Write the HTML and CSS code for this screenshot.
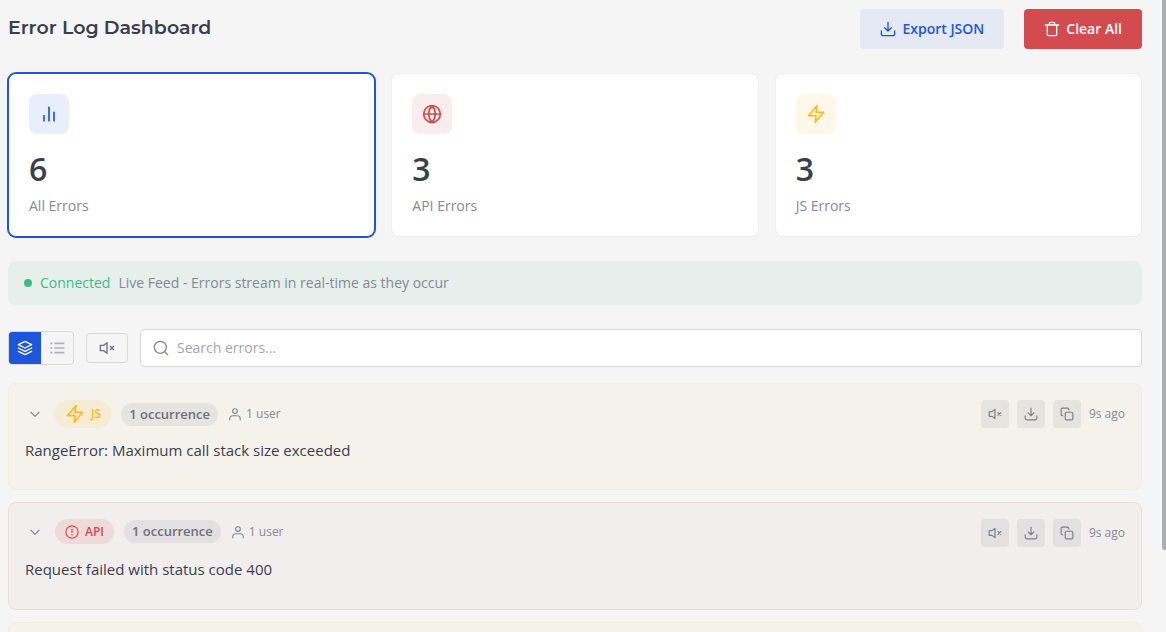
FILE: index.html
```
<!DOCTYPE html>
<html lang="en">
<head>
  <meta charset="UTF-8" />
  <title>Error Log Dashboard</title>
  <meta name="viewport" content="width=device-width, initial-scale=1" />
  <link rel="stylesheet" href="styles.css">
</head>
<body>
  <!-- shared icons -->
  <svg class="sprite" aria-hidden="true">
    <symbol id="i-download" viewBox="0 0 24 24"><path d="M2 15v4a3 3 0 0 0 3 3h14a3 3 0 0 0 3-3v-4M12 2v13M7 10l5 5 5-5" /></symbol>
    <symbol id="i-trash" viewBox="0 0 24 24"><path d="M2 6h20M5 6v14a2 2 0 0 0 2 2h10a2 2 0 0 0 2-2V6M8 6V4a2 2 0 0 1 2-2h4a2 2 0 0 1 2 2v2" /></symbol>
    <symbol id="i-bars" viewBox="0 0 24 24"><path d="M6 20v-6M12 20V4M18 20V10" /></symbol>
    <symbol id="i-globe" viewBox="0 0 24 24"><circle cx="12" cy="12" r="10" /><path d="M2 12h20M12 2a15.3 15.3 0 0 1 4 10 15.3 15.3 0 0 1-4 10 15.3 15.3 0 0 1-4-10 15.3 15.3 0 0 1 4-10z" /></symbol>
    <symbol id="i-bolt" viewBox="0 0 24 24"><path d="M13 2L3 14h9l-1 8 10-12h-9l1-8z" /></symbol>
    <symbol id="i-layers" viewBox="0 0 24 24"><path d="M12 2L2 7l10 5 10-5-10-5zM2 12l10 5 10-5M2 17l10 5 10-5" /></symbol>
    <symbol id="i-list" viewBox="0 0 24 24"><path stroke-linecap="butt" stroke-width="2.500" d="M8 5h15M8 12h15M8 19h15M2 5h3M2 12h3M2 19h3" /></symbol>
    <symbol id="i-mute" viewBox="0 0 24 24"><path d="M12 4L7 8H2v8h5l5 4zM17 9.500l5 5M22 9.500l-5 5" /></symbol>
    <symbol id="i-search" viewBox="0 0 24 24"><circle cx="11" cy="11" r="9" /><path d="M18 18l4 4" /></symbol>
    <symbol id="i-chevron" viewBox="0 0 24 24"><path d="M5 9l7 7 7-7" /></symbol>
    <symbol id="i-user" viewBox="0 0 24 24"><circle cx="12" cy="7" r="4" /><path d="M3 22v-2a5 5 0 0 1 5-5h8a5 5 0 0 1 5 5v2" /></symbol>
    <symbol id="i-alert" viewBox="0 0 24 24"><circle cx="12" cy="12" r="10.500" /><path d="M12 7v6M12 16v1" /></symbol>
    <symbol id="i-copy" viewBox="0 0 24 24"><rect x="9" y="9" width="13" height="13" rx="2" /><path d="M5 15H4a2 2 0 0 1-2-2V4a2 2 0 0 1 2-2h9a2 2 0 0 1 2 2v1" /></symbol>
  </svg>

  <div class="page">
    <header>
      <h1>Error Log Dashboard</h1>
      <div class="header-actions">
        <button class="btn btn-export"><svg><use href="#i-download" /></svg>Export JSON</button>
        <button class="btn btn-clear"><svg><use href="#i-trash" /></svg>Clear All</button>
      </div>
    </header>

    <section class="stats">
      <div class="stat active">
        <div class="stat-icon blue"><svg><use href="#i-bars" /></svg></div>
        <div class="stat-value">6</div>
        <div class="stat-label">All Errors</div>
      </div>
      <div class="stat">
        <div class="stat-icon red"><svg><use href="#i-globe" /></svg></div>
        <div class="stat-value">3</div>
        <div class="stat-label">API Errors</div>
      </div>
      <div class="stat">
        <div class="stat-icon yellow"><svg><use href="#i-bolt" /></svg></div>
        <div class="stat-value">3</div>
        <div class="stat-label">JS Errors</div>
      </div>
    </section>

    <div class="status">
      <span class="dot"></span>
      <span class="connected">Connected</span>
      <span>Live Feed - Errors stream in real-time as they occur</span>
    </div>

    <div class="toolbar">
      <div class="view-toggle">
        <button class="active" aria-label="Grouped view"><svg><use href="#i-layers" /></svg></button>
        <button aria-label="List view"><svg><use href="#i-list" /></svg></button>
      </div>
      <button class="mute" aria-label="Muted errors"><svg><use href="#i-mute" /></svg></button>
      <label class="search">
        <svg><use href="#i-search" /></svg>
        <input type="text" placeholder="Search errors..." aria-label="Search errors" />
      </label>
    </div>

    <main class="errors">
      <article class="error js">
        <div class="error-head">
          <div class="error-meta">
            <button class="expand" aria-label="Expand"><svg><use href="#i-chevron" /></svg></button>
            <span class="badge"><svg><use href="#i-bolt" /></svg>JS</span>
            <span class="count">1 occurrence</span>
            <span class="users"><svg><use href="#i-user" /></svg>1 user</span>
          </div>
          <div class="error-actions">
            <button aria-label="Mute"><svg><use href="#i-mute" /></svg></button>
            <button aria-label="Download"><svg><use href="#i-download" /></svg></button>
            <button aria-label="Copy"><svg><use href="#i-copy" /></svg></button>
            <time>9s ago</time>
          </div>
        </div>
        <p>RangeError: Maximum call stack size exceeded</p>
      </article>

      <article class="error api">
        <div class="error-head">
          <div class="error-meta">
            <button class="expand" aria-label="Expand"><svg><use href="#i-chevron" /></svg></button>
            <span class="badge"><svg><use href="#i-alert" /></svg>API</span>
            <span class="count">1 occurrence</span>
            <span class="users"><svg><use href="#i-user" /></svg>1 user</span>
          </div>
          <div class="error-actions">
            <button aria-label="Mute"><svg><use href="#i-mute" /></svg></button>
            <button aria-label="Download"><svg><use href="#i-download" /></svg></button>
            <button aria-label="Copy"><svg><use href="#i-copy" /></svg></button>
            <time>9s ago</time>
          </div>
        </div>
        <p>Request failed with status code 400</p>
      </article>

      <article class="error js"></article>
    </main>
  </div>
  <div class="scroll-thumb"></div>
</body>
</html>
```
FILE: styles.css
```
:root {
  --bg: #f5f5f5;
  --text: #3b3f4c;
  --muted: #868a93;
  --blue: #1d56db;
  --red: #d34b4e;
  --yellow: #fdb924;
  --green: #3fba86;
  --border: #d9d9db;
}
* {
  box-sizing: border-box;
}
body {
  margin: 0;
  height: 100vh;
  overflow: hidden;
  font-family: "Open Sans", "Noto Sans", sans-serif;
  font-size: 14px;
  line-height: 22px;
  background: var(--bg);
  color: var(--text);
}
button {
  display: flex;
  align-items: center;
  justify-content: center;
  padding: 0;
  border: none;
  background: none;
  font: inherit;
  color: inherit;
  cursor: pointer;
}
svg {
  width: 16px;
  height: 16px;
  flex: none;
  fill: none;
  stroke: currentColor;
  stroke-width: 2;
  stroke-linecap: round;
  stroke-linejoin: round;
}
.sprite {
  display: none;
}
.page {
  padding: 9px 24px 0 8px;
}
header {
  display: flex;
  justify-content: space-between;
  margin-bottom: 24px;
}
h1 {
  margin: 0;
  font-family: Montserrat, Inter, sans-serif;
  font-size: 19px;
  font-weight: 600;
  line-height: 38px;
}
.header-actions {
  display: flex;
  gap: 20px;
}
.btn {
  gap: 6px;
  height: 40px;
  padding: 0 20px;
  border-radius: 4px;
  font-weight: 600;
}
.btn-export {
  background: #e4e9f4;
  color: var(--blue);
}
.btn-clear {
  background: var(--red);
  color: #fff;
}

.stats {
  display: grid;
  grid-template-columns: repeat(3, 1fr);
  gap: 16px;
  margin-bottom: 24px;
}
.stat {
  padding: 20px;
  background: #fff;
  border: 1px solid #eeeeef;
  border-radius: 8px;
}
.stat.active {
  border-color: var(--blue);
  box-shadow: 0 0 0 1px var(--blue);
}
.stat-icon {
  display: flex;
  align-items: center;
  justify-content: center;
  width: 40px;
  height: 40px;
  margin-bottom: 16px;
  border-radius: 8px;
}
.stat-icon svg {
  width: 20px;
  height: 20px;
}
.blue {
  background: #e8eefb;
  color: var(--blue);
}
.red {
  background: #faeded;
  color: var(--red);
}
.yellow {
  background: #fff7e8;
  color: var(--yellow);
}
.stat-value {
  margin-bottom: 8px;
  font-size: 32px;
  font-weight: 600;
  line-height: 38px;
}
.stat-label {
  line-height: 20px;
  color: var(--muted);
}

.status {
  display: flex;
  align-items: center;
  gap: 8px;
  margin-bottom: 24px;
  padding: 11px 16px;
  border-radius: 8px;
  background: #e6efec;
  color: var(--muted);
}
.dot {
  width: 8px;
  height: 8px;
  border-radius: 50%;
  background: var(--green);
}
.connected {
  color: var(--green);
}

.toolbar {
  display: flex;
  align-items: center;
  gap: 12px;
  margin-bottom: 16px;
}
.view-toggle {
  display: flex;
  border: 1px solid var(--border);
  border-radius: 4px;
  overflow: hidden;
}
.view-toggle button {
  width: 32px;
  height: 32px;
  color: #aeb0b7;
}
.view-toggle .active {
  background: var(--blue);
  color: #fff;
}
.mute {
  width: 42px;
  height: 30px;
  border: 1px solid var(--border);
  border-radius: 4px;
  color: #6d717c;
}
.search {
  display: flex;
  flex: 1;
  align-items: center;
  gap: 8px;
  height: 38px;
  padding: 0 12px;
  background: #fff;
  border: 1px solid var(--border);
  border-radius: 4px;
  color: var(--muted);
}
.search input {
  flex: 1;
  padding: 0;
  border: none;
  outline: none;
  background: none;
  font: inherit;
  color: var(--text);
}
.search input::placeholder {
  color: #a3a6ad;
}

.errors {
  display: flex;
  flex-direction: column;
  gap: 12px;
}
.error {
  min-height: 107px;
  padding: 16px;
  border: 1px solid;
  border-radius: 8px;
}
.error.js {
  background: #f5f2eb;
  border-color: #f8ecd2;
}
.error.api {
  min-height: 108px;
  background: #f2eeed;
  border-color: #efdbdc;
}
.error-head {
  display: flex;
  align-items: flex-start;
  justify-content: space-between;
}
.error-meta {
  display: flex;
  align-items: center;
  gap: 10px;
}
.expand {
  width: 20px;
  height: 20px;
  color: var(--muted);
}
.expand svg {
  width: 14px;
  height: 14px;
}
.badge {
  display: flex;
  align-items: center;
  gap: 6px;
  height: 25px;
  padding: 0 10px;
  border-radius: 14px;
  font-size: 12px;
  font-weight: 600;
}
.badge svg {
  width: 14px;
  height: 14px;
}
.js .badge {
  height: 28px;
  background: #f6ebd3;
  color: var(--yellow);
}
.js .badge svg {
  width: 20px;
  height: 20px;
}
.api .badge {
  background: #eedad9;
  color: var(--red);
}
.count {
  padding: 0 8px;
  border-radius: 12px;
  font-size: 13px;
  font-weight: 600;
  line-height: 23px;
  color: #6d717c;
}
.users {
  display: flex;
  align-items: center;
  gap: 4px;
  font-size: 12px;
  color: var(--muted);
}
.users svg {
  width: 14px;
  height: 14px;
}
.error-actions {
  display: flex;
  align-items: center;
  gap: 8px;
}
.error-actions button {
  width: 28px;
  height: 28px;
  border-radius: 4px;
  color: #7b7f89;
}
.error-actions svg {
  width: 14px;
  height: 14px;
}
.js .count,
.js .error-actions button {
  background: #e6e4df;
}
.api .count,
.api .error-actions button {
  background: #e3e0e1;
}
.error-actions time {
  font-size: 12px;
  color: var(--muted);
}
.error p {
  margin: 11px 0 0;
  font-size: 15px;
}

/* custom scrollbar thumb along the window edge */
.scroll-thumb {
  position: fixed;
  top: 0;
  right: 0;
  width: 4px;
  height: 87vh;
  border-radius: 0 0 0 3px;
  background: #acadb2;
}
```
